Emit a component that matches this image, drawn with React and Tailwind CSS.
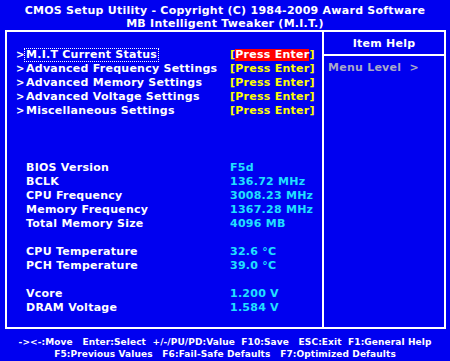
import React from 'react';

const menuItems = [
  'M.I.T Current Status',
  'Advanced Frequency Settings',
  'Advanced Memory Settings',
  'Advanced Voltage Settings',
  'Miscellaneous Settings',
];

// null = blank spacer row
const infoRows = [
  ['BIOS Version', 'F5d'],
  ['BCLK', '136.72 MHz'],
  ['CPU Frequency', '3008.23 MHz'],
  ['Memory Frequency', '1367.28 MHz'],
  ['Total Memory Size', '4096 MB'],
  null,
  ['CPU Temperature', '32.6 °C'],
  ['PCH Temperature', '39.0 °C'],
  null,
  ['Vcore', '1.200 V'],
  ['DRAM Voltage', '1.584 V'],
];

const App = () => {
  return (
    <div
      className="w-[450px] h-[361px] bg-[#0000f0] text-white font-bold overflow-hidden flex flex-col tracking-[0.25px]"
      style={{ fontFamily: '"DejaVu Sans", Verdana, sans-serif' }}
    >
      {/* --- TITLE --- */}
      <div className="pt-[4px] text-[11px] leading-[13px] text-center">
        <div>CMOS Setup Utility - Copyright (C) 1984-2009 Award Software</div>
        <div>MB Intelligent Tweaker (M.I.T.)</div>
      </div>

      {/* --- MAIN BOX --- */}
      <div className="ml-[5px] w-[441px] h-[299px] border-2 border-white flex">
        {/* left panel */}
        <div className="w-[315px] flex flex-col text-[11px] leading-[14px]">
          <div className="pt-[16px] flex flex-col">
            {menuItems.map((item, i) => (
              <div key={item} className="flex items-center h-[14px] pl-[9px]">
                <span className="w-[8px] text-[10px]">&gt;</span>
                <span className="w-[206px] flex">
                  <span
                    className={`px-[1px] leading-[12px] border border-dotted ${
                      i === 0 ? 'border-white' : 'border-transparent'
                    }`}
                  >
                    {item}
                  </span>
                </span>
                <span className="text-[#ffff00]">[</span>
                <span
                  className={`leading-[12px] ${
                    i === 0 ? 'bg-[#ff0000] text-white' : 'text-[#ffff00]'
                  }`}
                >
                  Press Enter
                </span>
                <span className="text-[#ffff00]">]</span>
              </div>
            ))}
          </div>

          <div className="mt-[43px] flex flex-col">
            {infoRows.map((row, i) =>
              row ? (
                <div key={i} className="flex h-[14px] pl-[19px]">
                  <span className="w-[204px]">{row[0]}</span>
                  <span className="text-[#20e0ff]">{row[1]}</span>
                </div>
              ) : (
                <div key={i} className="h-[14px]" />
              )
            )}
          </div>
        </div>

        {/* help panel */}
        <div className="w-[122px] border-l-2 border-white flex flex-col text-[11px]">
          <div className="h-[24px] pt-[2px] border-b-2 border-white flex items-center justify-center">
            Item Help
          </div>
          <div className="pt-[5px] pl-[4px] leading-[14px] text-[#a8a8c8]">
            Menu Level&nbsp;&nbsp;&gt;
          </div>
        </div>
      </div>

      {/* --- FOOTER --- */}
      <div className="mt-[7px] text-[9px] leading-[12px] text-center whitespace-pre tracking-[0.1px]">
        <div>{'-><-:Move   Enter:Select  +/-/PU/PD:Value  F10:Save   ESC:Exit  F1:General Help'}</div>
        <div>{'F5:Previous Values   F6:Fail-Safe Defaults   F7:Optimized Defaults'}</div>
      </div>
    </div>
  );
};

export default App;
